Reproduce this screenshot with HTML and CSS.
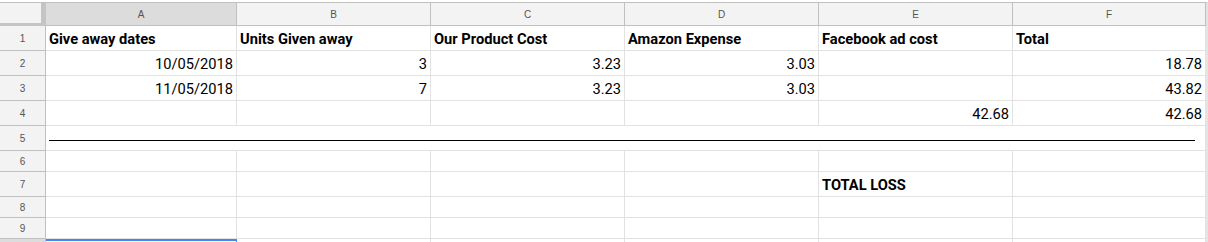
FILE: index.html
```html
<!DOCTYPE html>
<html lang="en">
<head>
    <meta charset="UTF-8">
    <meta name="viewport" content="width=device-width, initial-scale=1.0">
    <title>Give away costs</title>
    <link rel="stylesheet" href="styles.css">
</head>
<body>

<div class="sheet">
    <!-- column headers -->
    <div class="corner"></div>
    <div class="col-head selected">A</div>
    <div class="col-head">B</div>
    <div class="col-head">C</div>
    <div class="col-head">D</div>
    <div class="col-head">E</div>
    <div class="col-head">F</div>

    <!-- row 1 -->
    <div class="row-head">1</div>
    <div class="cell bold">Give away dates</div>
    <div class="cell bold">Units Given away</div>
    <div class="cell bold">Our Product Cost</div>
    <div class="cell bold">Amazon Expense</div>
    <div class="cell bold">Facebook ad cost</div>
    <div class="cell bold">Total</div>

    <!-- row 2 -->
    <div class="row-head">2</div>
    <div class="cell num">10/05/2018</div>
    <div class="cell num">3</div>
    <div class="cell num">3.23</div>
    <div class="cell num">3.03</div>
    <div class="cell"></div>
    <div class="cell num">18.78</div>

    <!-- row 3 -->
    <div class="row-head">3</div>
    <div class="cell num">11/05/2018</div>
    <div class="cell num">7</div>
    <div class="cell num">3.23</div>
    <div class="cell num">3.03</div>
    <div class="cell"></div>
    <div class="cell num">43.82</div>

    <!-- row 4 -->
    <div class="row-head">4</div>
    <div class="cell"></div>
    <div class="cell"></div>
    <div class="cell"></div>
    <div class="cell"></div>
    <div class="cell num">42.68</div>
    <div class="cell num">42.68</div>

    <!-- row 5: merged A:F with a divider line -->
    <div class="row-head">5</div>
    <div class="cell merged"><div class="divider"></div></div>

    <!-- row 6 -->
    <div class="row-head">6</div>
    <div class="cell"></div>
    <div class="cell"></div>
    <div class="cell"></div>
    <div class="cell"></div>
    <div class="cell"></div>
    <div class="cell"></div>

    <!-- row 7 -->
    <div class="row-head">7</div>
    <div class="cell"></div>
    <div class="cell"></div>
    <div class="cell"></div>
    <div class="cell"></div>
    <div class="cell bold">TOTAL LOSS</div>
    <div class="cell"></div>

    <!-- row 8 -->
    <div class="row-head">8</div>
    <div class="cell"></div>
    <div class="cell"></div>
    <div class="cell"></div>
    <div class="cell"></div>
    <div class="cell"></div>
    <div class="cell"></div>

    <!-- row 9 -->
    <div class="row-head">9</div>
    <div class="cell"></div>
    <div class="cell"></div>
    <div class="cell"></div>
    <div class="cell"></div>
    <div class="cell"></div>
    <div class="cell"></div>

    <!-- row 10 (active cell A10), only its top edge is in view -->
    <div class="row-head selected"></div>
    <div class="cell active"></div>
    <div class="cell"></div>
    <div class="cell"></div>
    <div class="cell"></div>
    <div class="cell"></div>
    <div class="cell"></div>
</div>

</body>
</html>
```

FILE: styles.css
```css
body {
    margin: 0;
    background-color: #fff;
    overflow: hidden;
    font-family: Roboto, "Liberation Sans", sans-serif;
}
.sheet {
    display: grid;
    grid-template-columns: 46px 191px 194px 194px 194px 194px 193px;
    grid-template-rows: 23px 25px 25px 25px 25px 25px 21px 25px 21px 21px 21px;
    width: 1206px;
    margin-top: 2px;
    border-top: 1px solid #c0c0c0;
    border-right: 2px solid #e4e4e4;
}

/* Header cells */
.corner {
    box-sizing: border-box;
    background-color: #f3f3f3;
    border-right: 5px solid #c4c4c4;
    border-bottom: 3px solid #c4c4c4;
}
.col-head, .row-head {
    box-sizing: border-box;
    display: flex;
    align-items: center;
    justify-content: center;
    background-color: #f3f3f3;
    color: #555;
    font-family: "Liberation Sans", Arial, sans-serif;
    font-size: 10px;
}
.col-head {
    border-right: 1px solid #c0c0c0;
    border-bottom: 1px solid #c0c0c0;
}
.row-head {
    border-right: 1px solid #c0c0c0;
    border-bottom: 1px solid #c0c0c0;
    padding-top: 1px;
}
.col-head.selected, .row-head.selected {
    background-color: #dcdcdc;
}

/* Data cells */
.cell {
    box-sizing: border-box;
    display: flex;
    align-items: flex-end;
    padding: 0 3px 2px 3px;
    border-right: 1px solid #e2e2e2;
    border-bottom: 1px solid #e2e2e2;
    color: #000;
    font-size: 14.67px;
    white-space: nowrap;
    overflow: hidden;
}
.bold {
    font-weight: bold;
}
.num {
    justify-content: flex-end;
}
.merged {
    grid-column: span 6;
    align-items: flex-start;
    padding: 0 10px 0 3px;
}
.divider {
    flex: 1;
    height: 1px;
    margin-top: 14px;
    background-color: #000;
}
.active {
    box-shadow: inset 0 2px 0 #4285f4;
    border-right-color: #4285f4;
}
```
